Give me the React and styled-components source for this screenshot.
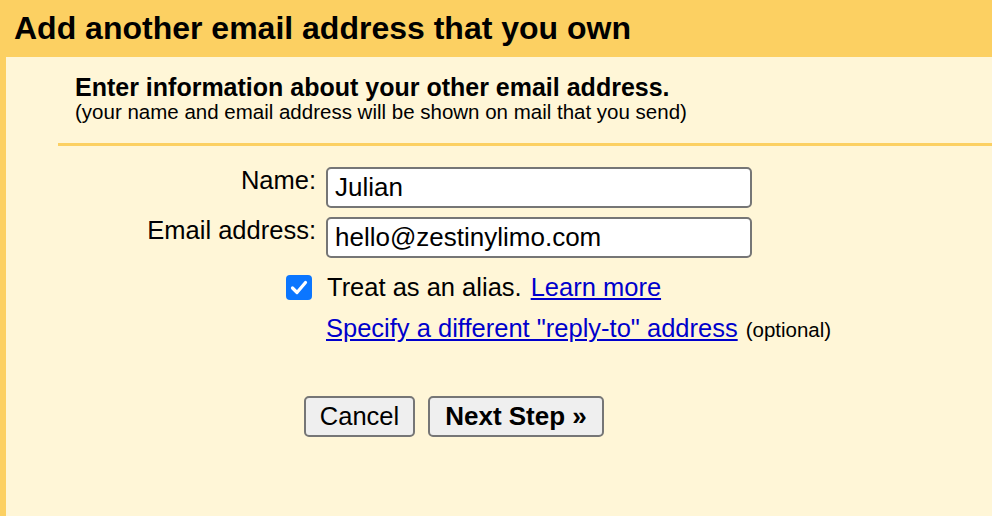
import styled, { createGlobalStyle } from "styled-components";

const yellow = "#fcd062";
const cream = "#fff6d7";

const GlobalStyle = createGlobalStyle`
  html, body {
    margin: 0;
    padding: 0;
    background: ${cream};
  }
  body {
    font-family: "Liberation Sans", Arial, sans-serif;
    color: #000;
  }
`;

const Page = styled.div`
  height: 100vh;
  background: ${yellow};
  display: flex;
  flex-direction: column;
  overflow: hidden;
`;

const Header = styled.h1`
  margin: 0;
  height: 57px;
  padding-left: 14px;
  font-size: 32px;
  font-weight: bold;
  line-height: 57px;
  white-space: nowrap;
`;

const Body = styled.div`
  flex: 1;
  margin-left: 6px;
  background: ${cream};
`;

const Intro = styled.div`
  padding: 16px 0 0 69px;
`;

const Heading = styled.div`
  font-size: 25px;
  font-weight: bold;
  line-height: 28px;
  white-space: nowrap;
`;

const Note = styled.div`
  font-size: 20.5px;
  line-height: 22px;
  white-space: nowrap;
`;

const Divider = styled.hr`
  margin: 20px 0 0 52px;
  border: 0;
  height: 3px;
  background: ${yellow};
`;

const Form = styled.div`
  display: grid;
  grid-template-columns: 310px 426px;
  column-gap: 10px;
  row-gap: 9px;
  margin-top: 21px;
`;

const Label = styled.label`
  text-align: right;
  font-size: 25.5px;
  line-height: 26px;
  white-space: nowrap;
`;

const Input = styled.input`
  box-sizing: border-box;
  width: 426px;
  height: 41px;
  margin: 0;
  border: 2px solid #767676;
  border-radius: 5px;
  background: #fff;
  font-family: "Liberation Sans", Arial, sans-serif;
  font-size: 26px;
  padding: 0 7px;
  color: #000;
  outline: none;
`;

const Options = styled.div`
  margin: 14px 0 0 280px;
  display: flex;
  flex-direction: column;
  gap: 11px;
`;

const OptionRow = styled.div`
  display: flex;
  align-items: ${(p) => (p.$baseline ? "baseline" : "center")};
  height: 30px;
  font-size: 25.5px;
  line-height: 30px;
  white-space: nowrap;
  padding-left: ${(p) => p.$indent || 0}px;
`;

const Check = styled.span`
  width: 26px;
  height: 25px;
  border-radius: 4px;
  background: #0b76ff;
  display: inline-flex;
  align-items: center;
  justify-content: center;
  margin-right: 15px;
`;

const Link = styled.a`
  color: #0000cc;
  text-decoration: underline;
  cursor: pointer;
  margin-left: ${(p) => p.$gap || 0}px;
`;

const Small = styled.span`
  font-size: 20.5px;
  margin-left: 8px;
`;

const Buttons = styled.div`
  display: flex;
  gap: 13px;
  margin: 53px 0 0 298px;
`;

const Button = styled.button`
  box-sizing: border-box;
  height: 41px;
  width: ${(p) => p.$w}px;
  padding: 0;
  border: 2px solid #767676;
  border-radius: 5px;
  background: #efefef;
  font-family: "Liberation Sans", Arial, sans-serif;
  font-size: ${(p) => (p.$bold ? 26 : 25.5)}px;
  font-weight: ${(p) => (p.$bold ? "bold" : "normal")};
  color: #000;
  white-space: nowrap;
`;

export default function App() {
  return (
    <Page>
      <GlobalStyle />
      <Header>Add another email address that you own</Header>
      <Body>
        <Intro>
          <Heading>Enter information about your other email address.</Heading>
          <Note>(your name and email address will be shown on mail that you send)</Note>
        </Intro>
        <Divider />
        <Form>
          <Label>Name:</Label>
          <Input defaultValue="Julian" />
          <Label>Email address:</Label>
          <Input defaultValue="hello@zestinylimo.com" />
        </Form>
        <Options>
          <OptionRow>
            <Check>
              <svg width="18" height="15" viewBox="0 0 18 15">
                <path d="M2.5 8 L7 12.5 L15.5 2.5" fill="none" stroke="#fff" strokeWidth="3.2" strokeLinecap="round" strokeLinejoin="round" />
              </svg>
            </Check>
            Treat as an alias.
            <Link $gap={9}>Learn more</Link>
          </OptionRow>
          <OptionRow $indent={40} $baseline>
            <Link>Specify a different "reply-to" address</Link>
            <Small>(optional)</Small>
          </OptionRow>
        </Options>
        <Buttons>
          <Button $w={111}>Cancel</Button>
          <Button $w={176} $bold>Next Step »</Button>
        </Buttons>
      </Body>
    </Page>
  );
}
